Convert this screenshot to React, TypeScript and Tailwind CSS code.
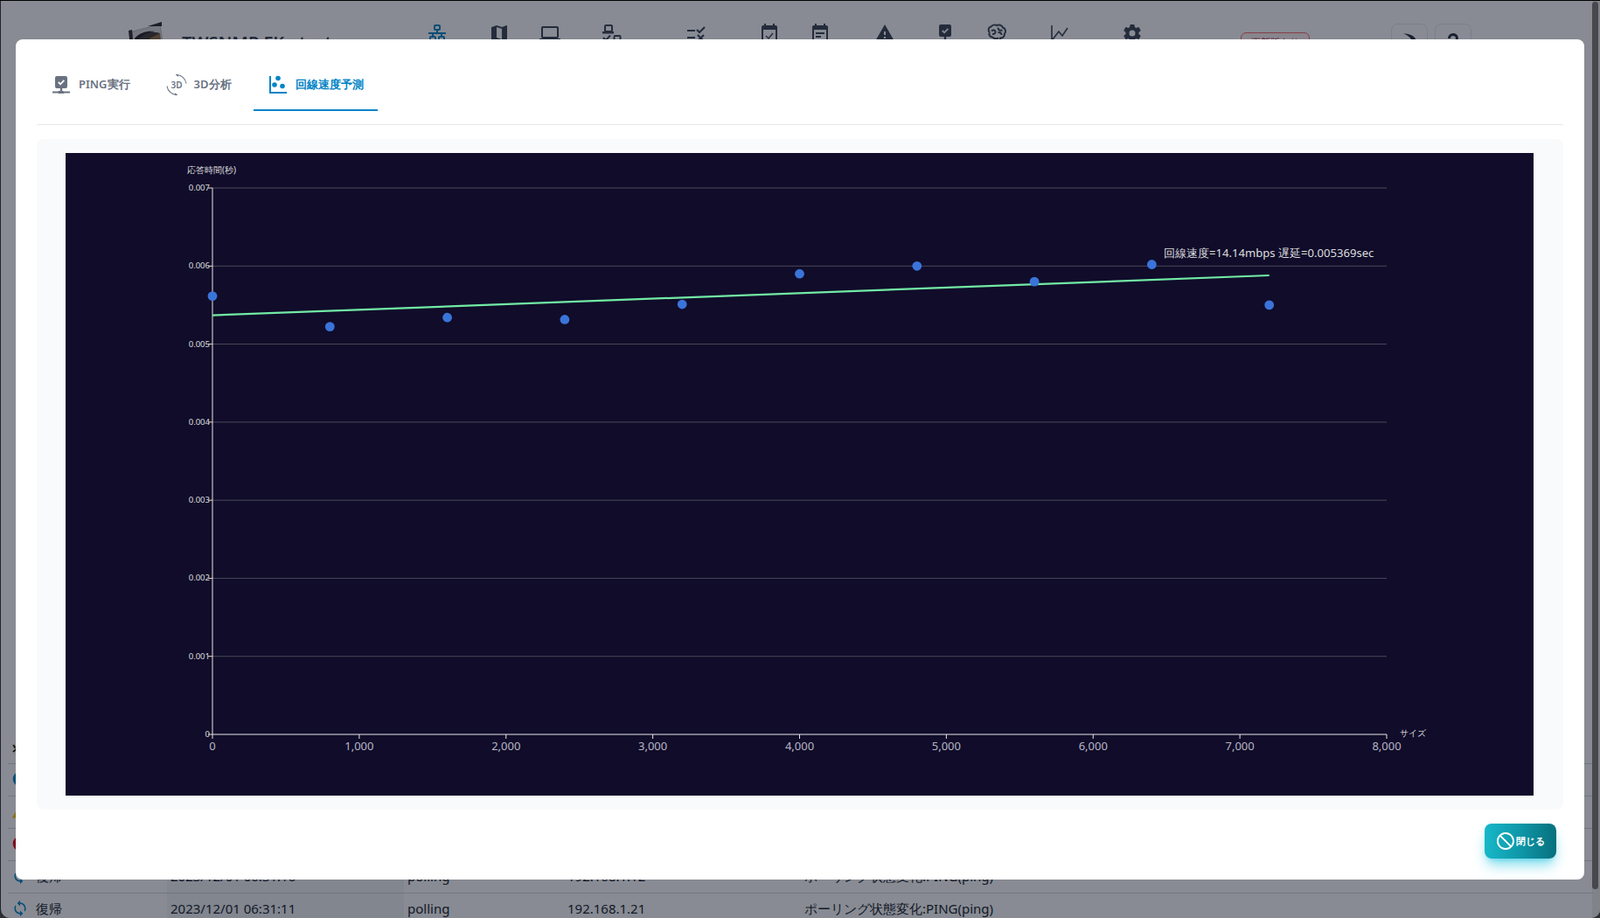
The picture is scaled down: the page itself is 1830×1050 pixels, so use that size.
import React from 'react';

type IconProps = { className?: string };

const Mdi = ({ d, className }: { d: string; className?: string }) => (
  <svg viewBox="0 0 24 24" fill="currentColor" className={className}>
    <path d={d} />
  </svg>
);

const LAN =
  'M10,2C8.89,2 8,2.89 8,4V7C8,8.11 8.89,9 10,9H11V11H2V13H6V15H5C3.89,15 3,15.89 3,17V20C3,21.11 3.89,22 5,22H9C10.11,22 11,21.11 11,20V17C11,15.89 10.11,15 9,15H8V13H16V15H15C13.89,15 13,15.89 13,17V20C13,21.11 13.89,22 15,22H19C20.11,22 21,21.11 21,20V17C21,15.89 20.11,15 19,15H18V13H22V11H13V9H14C15.11,9 16,8.11 16,7V4C16,2.89 15.11,2 14,2H10M10,4H14V7H10V4M5,17H9V20H5V17M15,17H19V20H15V17Z';
const MAP =
  'M15,19L9,16.89V5L15,7.11M20.5,3C20.44,3 20.39,3 20.34,3L15,5.1L9,3L3.36,4.9C3.15,4.97 3,5.15 3,5.38V20.5A0.5,0.5 0 0,0 3.5,21C3.55,21 3.61,21 3.66,21L9,18.9L15,21L20.64,19.1C20.85,19 21,18.85 21,18.62V3.5A0.5,0.5 0 0,0 20.5,3Z';
const LAPTOP =
  'M4,6H20V16H4M20,18A2,2 0 0,0 22,16V6C22,4.89 21.1,4 20,4H4C2.89,4 2,4.89 2,6V16A2,2 0 0,0 4,18H0V20H24V18H20Z';
const ALERT = 'M13,14H11V10H13M13,18H11V16H13M1,21H23L12,2L1,21Z';
const COG =
  'M12,15.5A3.5,3.5 0 0,1 8.5,12A3.5,3.5 0 0,1 12,8.5A3.5,3.5 0 0,1 15.5,12A3.5,3.5 0 0,1 12,15.5M19.43,12.97C19.47,12.65 19.5,12.33 19.5,12C19.5,11.67 19.47,11.34 19.43,11L21.54,9.37C21.73,9.22 21.78,8.95 21.66,8.73L19.66,5.27C19.54,5.05 19.27,4.96 19.05,5.05L16.56,6.05C16.04,5.66 15.5,5.32 14.87,5.07L14.5,2.42C14.46,2.18 14.25,2 14,2H10C9.75,2 9.54,2.18 9.5,2.42L9.13,5.07C8.5,5.32 7.96,5.66 7.44,6.05L4.95,5.05C4.73,4.96 4.46,5.05 4.34,5.27L2.34,8.73C2.21,8.95 2.27,9.22 2.46,9.37L4.57,11C4.53,11.34 4.5,11.67 4.5,12C4.5,12.33 4.53,12.65 4.57,12.97L2.46,14.63C2.27,14.78 2.21,15.05 2.34,15.27L4.34,18.73C4.46,18.95 4.73,19.03 4.95,18.95L7.44,17.94C7.96,18.34 8.5,18.68 9.13,18.93L9.5,21.58C9.54,21.82 9.75,22 10,22H14C14.25,22 14.46,21.82 14.5,21.58L14.87,18.93C15.5,18.67 16.04,18.34 16.56,17.94L19.05,18.95C19.27,19.03 19.54,18.95 19.66,18.73L21.66,15.27C21.78,15.05 21.73,14.78 21.54,14.63L19.43,12.97Z';
const SYNC =
  'M12,18A6,6 0 0,1 6,12C6,11 6.25,10.03 6.7,9.2L5.24,7.74C4.46,8.97 4,10.43 4,12A8,8 0 0,0 12,20V23L16,19L12,15M12,4V1L8,5L12,9V6A6,6 0 0,1 18,12C18,13 17.75,13.97 17.3,14.8L18.76,16.26C19.54,15.03 20,13.57 20,12A8,8 0 0,0 12,4Z';
const CANCEL =
  'M12 2C17.5 2 22 6.5 22 12S17.5 22 12 22 2 17.5 2 12 6.5 2 12 2M12 4C10.1 4 8.4 4.6 7.1 5.7L18.3 16.9C19.3 15.5 20 13.8 20 12C20 7.6 16.4 4 12 4M16.9 18.3L5.7 7.1C4.6 8.4 4 10.1 4 12C4 16.4 7.6 20 12 20C13.9 20 15.6 19.4 16.9 18.3Z';
const HELP =
  'M10,19H13V22H10V19M12,2C17.35,2.22 19.68,7.62 16.5,11.67C15.67,12.67 14.33,13.33 13.67,14.17C13,15 13,16 13,17H10C10,15.33 10,13.92 10.67,12.92C11.33,11.92 12.67,11.33 13.5,10.67C15.92,8.43 15.32,5.26 12,5A3,3 0 0,0 9,8H6A6,6 0 0,1 12,2Z';

// monitor with a check on a network line
const LanCheckIcon = ({ className }: IconProps) => (
  <svg viewBox="0 0 24 24" className={className}>
    <path
      fill="currentColor"
      d="M7 2h10a2 2 0 0 1 2 2v10a2 2 0 0 1-2 2h-3.8v3h.6a1 1 0 0 1 1 .5H22v2h-6.4a1.5 1.5 0 0 1-1.2.5H9.6a1.5 1.5 0 0 1-1.2-.5H2v-2h6.2a1 1 0 0 1 1-.5h1.6v-3H7a2 2 0 0 1-2-2V4a2 2 0 0 1 2-2z"
    />
    <path d="M8.8 9l2.3 2.3 4.2-4.4" fill="none" stroke="white" strokeWidth="1.8" />
  </svg>
);

const Rotate3dIcon = ({ className }: IconProps) => (
  <svg viewBox="0 0 24 24" className={className}>
    <path d="M11.5 0.5A11.5 11.5 0 0 1 23 10.5" fill="none" stroke="currentColor" strokeWidth="1.1" />
    <path d="M1 13.5A11.5 11.5 0 0 0 12.5 23.5" fill="none" stroke="currentColor" strokeWidth="1.1" />
    <path d="M11 0L14 -0.5L13.5 3z M13 24L10 24.5L10.5 21z" fill="currentColor" />
    <text x="12" y="15.5" textAnchor="middle" fontSize="10" fill="currentColor">
      3D
    </text>
  </svg>
);

const ScatterIcon = ({ className }: IconProps) => (
  <svg viewBox="0 0 24 24" fill="currentColor" className={className}>
    <path d="M2 2h2v18h18v2H2z" />
    <circle cx="12" cy="4.5" r="2.8" />
    <circle cx="8" cy="12" r="2.8" />
    <circle cx="17" cy="13.5" r="2.8" />
  </svg>
);

const DeviceCheckIcon = ({ className }: IconProps) => (
  <svg viewBox="0 0 24 24" className={className}>
    <rect x="4" y="3" width="8" height="7" rx="1" fill="none" stroke="currentColor" strokeWidth="2" />
    <path fill="currentColor" d="M1 10h13v2.5H1z" />
    <path d="M2 17l3 3 5-5.5" fill="none" stroke="currentColor" strokeWidth="2" />
    <rect x="14.5" y="15" width="7" height="7" rx="1" fill="none" stroke="currentColor" strokeWidth="2" />
  </svg>
);

const ListCheckXIcon = ({ className }: IconProps) => (
  <svg viewBox="0 0 24 24" className={className}>
    <path fill="currentColor" d="M2 8h9v2H2zM2 16h9v2H2z" />
    <path d="M13 8l3 3 6-6M14 14l7 7M21 14l-7 7" fill="none" stroke="currentColor" strokeWidth="2.2" />
  </svg>
);

const CalendarCheckIcon = ({ className }: IconProps) => (
  <svg viewBox="0 0 24 24" className={className}>
    <path fill="currentColor" d="M6 1h2v2h8V1h2v2h1a2 2 0 0 1 2 2v3H3V5a2 2 0 0 1 2-2h1z" />
    <rect x="4" y="5" width="16" height="18" rx="1" fill="none" stroke="currentColor" strokeWidth="2" />
    <path d="M8 15l3 3 5-6" fill="none" stroke="currentColor" strokeWidth="1.4" />
  </svg>
);

const CalendarTextIcon = ({ className }: IconProps) => (
  <svg viewBox="0 0 24 24" className={className}>
    <path fill="currentColor" d="M6 1h2v2h8V1h2v2h1a2 2 0 0 1 2 2v3H3V5a2 2 0 0 1 2-2h1z" />
    <rect x="4" y="5" width="16" height="18" rx="1" fill="none" stroke="currentColor" strokeWidth="2" />
    <path fill="currentColor" d="M7 11h10v2H7zM7 15h6v2H7z" />
  </svg>
);

const BrainIcon = ({ className }: IconProps) => (
  <svg viewBox="0 0 24 24" fill="none" stroke="currentColor" strokeWidth="2" className={className}>
    <path d="M4 11C1.5 9 2.5 5 5.5 4.5C7 2.5 10 2 12 3C14 2 18 2.5 19 5.5C22 6.5 23 10 21 12.5C21 15.5 19 17.5 16 17.5L15 22M4 11C2.5 13 4 16.5 7 16.5C9 18.5 12 18.5 14 17.5" />
    <path d="M6 9.5C8 7.5 10.5 8.5 10.5 10.5S8.5 13.5 7 12.5M13.5 5.5C13.5 8 15.5 9.5 18.5 8.5M13.5 11.5C15.5 10.5 17.5 11.5 17.5 14" />
  </svg>
);

const ChartIcon = ({ className }: IconProps) => (
  <svg viewBox="0 0 24 24" fill="none" stroke="currentColor" strokeWidth="1.6" className={className}>
    <path d="M3 3v20M4 19l7-9 4 5 6-9" />
  </svg>
);

const MoonIcon = ({ className }: IconProps) => (
  <svg viewBox="0 0 24 24" fill="currentColor" className={className}>
    <path d="M5 2.5C15 2 20.5 7.5 20.5 13S15 23 8 21.5C13 19.5 15 16.5 15 12.5S11 4.5 5 2.5z" />
  </svg>
);

const Logo = () => (
  <svg viewBox="0 0 44 44" className="h-[44px] w-[44px]">
    <path d="M4 12L36 4L42 44H6z" fill="#d8d8d8" stroke="#9a9a9a" strokeWidth="0.6" />
    <path d="M0 11L4 10L6 32L2 30z" fill="#2a2a2a" />
    <path d="M22 6L38 1L38 6z" fill="#26262c" />
    <path d="M6 22C10 14 22 10 36 14L36 44L6 44z" fill="#3b3530" />
    <path d="M7 20C13 13 22 11 30 12C20 13 14 17 9 24z" fill="#1c1c1e" />
    <path d="M24 20L36 14L38 30L26 32z" fill="#8a6a3e" />
  </svg>
);

const NAV_ICONS: { node: React.ReactNode; gap: string }[] = [
  { node: <Mdi d={LAN} className="h-6 w-6 text-[#0284c7]" />, gap: '' },
  { node: <Mdi d={MAP} className="h-6 w-6" />, gap: 'ml-[47px]' },
  { node: <Mdi d={LAPTOP} className="h-6 w-6" />, gap: 'ml-[34px]' },
  { node: <DeviceCheckIcon className="h-6 w-6" />, gap: 'ml-[47px]' },
  { node: <ListCheckXIcon className="h-6 w-6" />, gap: 'ml-[72px]' },
  { node: <CalendarCheckIcon className="h-6 w-6" />, gap: 'ml-[60px]' },
  { node: <CalendarTextIcon className="h-6 w-6" />, gap: 'ml-[34px]' },
  { node: <Mdi d={ALERT} className="h-6 w-6" />, gap: 'ml-[50px]' },
  { node: <LanCheckIcon className="h-6 w-6" />, gap: 'ml-[45px]' },
  { node: <BrainIcon className="h-6 w-6" />, gap: 'ml-[35px]' },
  { node: <ChartIcon className="h-6 w-6" />, gap: 'ml-[48px]' },
  { node: <Mdi d={COG} className="h-6 w-6" />, gap: 'ml-[59px]' },
];

const Header = () => (
  <div className="flex h-[836px] items-start text-[#374151]">
    <div className="ml-[146px] mt-[23px]">
      <Logo />
    </div>
    <div className="ml-[17px] mt-[34px] w-[192px] whitespace-nowrap text-[20px] font-semibold leading-7">TWSNMP FK - test</div>
    <div className="ml-[88px] mt-[25px] flex">
      {NAV_ICONS.map((item, i) => (
        <div key={i} className={item.gap}>
          {item.node}
        </div>
      ))}
    </div>
    <div className="ml-[112px] mt-[36px] whitespace-nowrap rounded-md border border-red-400 bg-red-50 px-[11px] py-[2px] text-[11px] text-red-800">
      更新版あり
    </div>
    <div className="ml-[93px] mt-[26px] flex h-10 w-[42px] justify-center rounded-lg border border-gray-200 pt-[8px] text-gray-800">
      <MoonIcon className="h-6 w-6" />
    </div>
    <div className="ml-2 mt-[26px] flex h-10 w-[42px] justify-center rounded-lg border border-gray-200 pt-[8px] text-gray-800">
      <Mdi d={HELP} className="h-6 w-6" />
    </div>
  </div>
);

const LOG_ROWS = [
  { level: '情報', color: 'text-[#0284c7]', icon: 'circle', time: '2023/12/01 06:31:46', ip: '192.168.1.1' },
  { level: '注意', color: 'text-yellow-400', icon: 'triangle', time: '2023/12/01 06:31:36', ip: '192.168.1.5' },
  { level: '重度', color: 'text-red-600', icon: 'circle', time: '2023/12/01 06:31:26', ip: '192.168.1.9' },
  { level: '復帰', color: 'text-[#0284c7]', icon: 'sync', time: '2023/12/01 06:31:16', ip: '192.168.1.12' },
  { level: '復帰', color: 'text-[#0284c7]', icon: 'sync', time: '2023/12/01 06:31:11', ip: '192.168.1.21' },
];

const LevelIcon = ({ icon, color }: { icon: string; color: string }) => {
  if (icon === 'sync') return <Mdi d={SYNC} className={`h-5 w-5 ${color}`} />;
  if (icon === 'triangle') return <Mdi d="M1,21H23L12,2L1,21Z" className={`h-5 w-5 ${color}`} />;
  return <Mdi d="M12,2A10,10 0 1,1 12,22A10,10 0 1,1 12,2Z" className={`h-5 w-5 ${color}`} />;
};

const LogTable = () => (
  <div className="ml-2 mr-[8px] text-[15px] text-[#111827]">
    <div className="h-9 pl-[6px] pt-[9px] font-black leading-5 text-black">状態</div>
    {LOG_ROWS.map((row, i) => (
      <div key={i} className="grid h-[37px] grid-cols-[182px_271px_183px_271px_1fr] items-stretch border-t border-gray-300">
        <div className="flex items-center gap-2 pb-[2px] pl-1">
          <LevelIcon icon={row.icon} color={row.color} />
          <span>{row.level}</span>
        </div>
        <div className="flex items-center bg-gray-100 pb-[2px] pl-1">{row.time}</div>
        <div className="flex items-center pb-[2px] pl-1">polling</div>
        <div className="flex items-center pb-[2px] pl-1">{row.ip}</div>
        <div className="flex items-center pb-[2px] pl-1">ポーリング状態変化:PING(ping)</div>
      </div>
    ))}
  </div>
);

// line speed chart, drawn in the chart's own pixel coordinates
const PLOT = { left: 168, right: 1511, top: 40, bottom: 665 };
const sx = (v: number) => PLOT.left + (v / 8000) * (PLOT.right - PLOT.left);
const sy = (v: number) => PLOT.bottom - (v / 0.007) * (PLOT.bottom - PLOT.top);

const POINTS: [number, number][] = [
  [0, 0.005616],
  [800, 0.005224],
  [1600, 0.00534],
  [2400, 0.005315],
  [3200, 0.00551],
  [4000, 0.0059],
  [4800, 0.006],
  [5600, 0.0058],
  [6400, 0.00602],
  [7200, 0.0055],
];

const SpeedChart = () => {
  const yTicks = [0.001, 0.002, 0.003, 0.004, 0.005, 0.006, 0.007];
  const xTicks = [0, 1000, 2000, 3000, 4000, 5000, 6000, 7000, 8000];
  return (
    <svg viewBox="0 0 1679 735" className="block h-full w-full">
      {yTicks.map((t) => (
        <g key={t}>
          <line x1={PLOT.left} x2={PLOT.right} y1={sy(t)} y2={sy(t)} stroke="#4b4958" />
          <line x1={PLOT.left - 5} x2={PLOT.left} y1={sy(t)} y2={sy(t)} stroke="#ddd" />
          <text x={PLOT.left - 3} y={sy(t) + 3} textAnchor="end" fontSize="9.5" fill="#ddd">
            {t.toFixed(3)}
          </text>
        </g>
      ))}
      <line x1={PLOT.left - 5} x2={PLOT.left} y1={PLOT.bottom} y2={PLOT.bottom} stroke="#ddd" />
      <text x={PLOT.left - 3} y={PLOT.bottom + 3} textAnchor="end" fontSize="9.5" fill="#ddd">
        0
      </text>
      <line x1={PLOT.left} x2={PLOT.left} y1={PLOT.top} y2={PLOT.bottom} stroke="#e5e5e5" />
      <line x1={PLOT.left} x2={PLOT.right} y1={PLOT.bottom} y2={PLOT.bottom} stroke="#e5e5e5" strokeWidth="1.2" />
      {xTicks.map((t) => (
        <g key={t}>
          <line x1={sx(t)} x2={sx(t)} y1={PLOT.bottom} y2={PLOT.bottom + 5} stroke="#e5e5e5" />
          <text x={sx(t)} y={PLOT.bottom + 18} textAnchor="middle" fontSize="13" fill="#b9b7c5">
            {t.toLocaleString('en-US')}
          </text>
        </g>
      ))}
      <text x="139" y="23" fontSize="10" fill="#ddd">
        応答時間(秒)
      </text>
      <text x="1526" y="667" fontSize="10" fill="#ddd">
        サイズ
      </text>
      <line x1={sx(0)} y1={sy(0.005369)} x2={sx(7200)} y2={sy(0.00588)} stroke="#72eba5" strokeWidth="2.2" />
      {POINTS.map(([x, y]) => (
        <circle key={x} cx={sx(x)} cy={sy(y)} r="5.4" fill="#3a74d9" />
      ))}
      <text x="1256" y="119" fontSize="13.1" fill="#ddd">
        回線速度=14.14mbps 遅延=0.005369sec
      </text>
    </svg>
  );
};

const TABS = [
  { label: 'PING実行', icon: <LanCheckIcon className="h-6 w-6" />, active: false },
  { label: '3D分析', icon: <Rotate3dIcon className="h-6 w-6" />, active: false },
  { label: '回線速度予測', icon: <ScatterIcon className="h-6 w-6" />, active: true },
];

const Modal = () => (
  <div className="absolute left-[18px] top-[44px] h-[961px] w-[1794px] rounded-lg bg-white p-6">
    <div className="flex gap-[9px]">
      {TABS.map((tab) => (
        <button
          key={tab.label}
          className={`flex h-[58px] items-center gap-2 border-b-2 px-4 text-[13px] font-semibold ${
            tab.active ? 'border-[#0284c7] text-[#0284c7]' : 'border-transparent text-gray-500'
          }`}
        >
          {tab.icon}
          {tab.label}
        </button>
      ))}
    </div>
    <div className="mt-[15px] h-px bg-gray-200" />
    <div className="mt-4 rounded-lg bg-gray-50 pb-4 pl-[33px] pr-[34px] pt-4">
      <div className="h-[735px] bg-[#100c2a]">
        <SpeedChart />
      </div>
    </div>
    <div className="mt-4 flex justify-end pr-2">
      <button className="flex h-10 w-[82px] items-center rounded-lg bg-gradient-to-r from-[#17b8c9] via-[#0e97a8] to-[#08707d] pl-3 text-[11px] font-bold text-white shadow-lg shadow-cyan-500/50">
        <Mdi d={CANCEL} className="h-6 w-6" />
        閉じる
      </button>
    </div>
  </div>
);

export default function App() {
  return (
    <div className="relative h-screen w-full overflow-hidden border-t border-black bg-[#2e2e30] font-[family-name:Inter,'Noto_Sans_CJK_JP',sans-serif]">
      <div className="ml-px h-full overflow-hidden rounded-b-[10px] bg-white">
        <Header />
        <LogTable />
      </div>
      <div className="absolute inset-0 rounded-b-[10px] bg-[#111827]/50" />
      <div className="absolute bottom-0 right-0 top-0 w-[9px] rounded-br-[10px] bg-black/5" />
      <div className="absolute right-[2px] top-[1px] h-[1015px] w-[7px] rounded-full bg-[#47484c]" />
      <Modal />
    </div>
  );
}
